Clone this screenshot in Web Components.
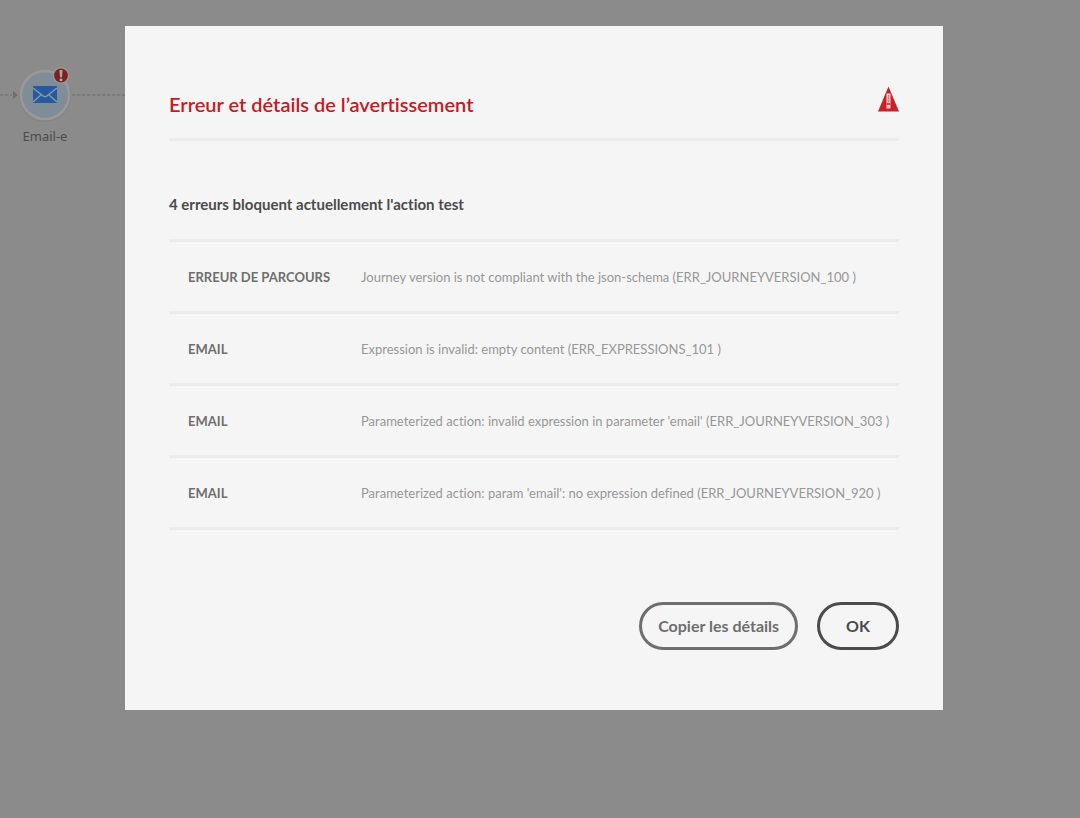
<!DOCTYPE html>
<html lang="fr">
<head>
<meta charset="utf-8">
<meta name="viewport" content="width=device-width, initial-scale=1">
<title>Erreur et détails de l’avertissement</title>
<style>
  html, body { margin: 0; min-height: 100%; }
  body { background: #8b8b8b; font-family: Lato, "Noto Sans", sans-serif; font-variant-ligatures: none; color: #4b4b4b; }
</style>
</head>
<body>
<journey-canvas>
  <journey-node slot="node">Email-e</journey-node>
  <error-dialog>
    <span slot="title">Erreur et détails de l’avertissement</span>
    <span slot="summary">4 erreurs bloquent actuellement l'action test</span>
    <error-table></error-table>
    <pill-button slot="actions" style="--tone:#6e6e6e">Copier les détails</pill-button>
    <pill-button slot="actions" style="--tone:#4b4b4b;--pad:26px">OK</pill-button>
  </error-dialog>
</journey-canvas>

<script>
class Base extends HTMLElement {
  constructor() {
    super();
    this.attachShadow({ mode: "open" }).innerHTML = this.constructor.html;
  }
}

customElements.define("journey-canvas", class extends Base {
  static html = `
    <style>
      :host { display: block; position: relative; min-height: 100vh; box-sizing: border-box; padding: 26px 137px 48px 125px; }
    </style>
    <slot name="node"></slot>
    <slot></slot>`;
});

customElements.define("journey-node", class extends Base {
  static html = `
    <style>
      :host { position: absolute; left: 0; top: 64px; width: 125px; color: #4b4b4b; }
      svg { display: block; }
      .label { width: 90px; text-align: center; font: 13px/18px "Noto Sans", sans-serif; }
    </style>
    <svg width="125" height="63" viewBox="0 0 125 63" aria-hidden="true">
      <path d="M0 31H12M72 31H125" stroke="#777" stroke-width="1.6" stroke-dasharray="3.4 1.6" fill="none"/>
      <path d="M13 27l5 4-5 4z" fill="#6e6e6e"/>
      <circle cx="45" cy="32" r="26" fill="#848484"/>
      <circle cx="45" cy="31" r="24" fill="#808c98" stroke="#999" stroke-width="2.6"/>
      <path d="M33 22H57V39H33z" fill="#265aa0"/>
      <path d="M33 24L42.500 31.500Q45 34 47.500 31.500L57 24M33 38L41 31M57 38L49 31" stroke="#8798ad" stroke-width="1.4" fill="none"/>
      <circle cx="61" cy="11.500" r="7.600" fill="#7d2020" stroke="#999" stroke-width="1.400"/>
      <path d="M59.500 6H62.500L62 13.200H60z" fill="#aaa"/>
      <circle cx="61" cy="15.700" r="1.500" fill="#aaa"/>
    </svg>
    <div class="label"><slot></slot></div>`;
});

customElements.define("error-dialog", class extends Base {
  static html = `
    <style>
      :host { display: block; }
      dialog { display: block; position: static; margin: 0; border: 0; box-sizing: border-box; width: 100%; max-width: none; max-height: none; padding: 60px 44px; background: #f5f5f5; color: inherit; }
      header { display: flex; justify-content: space-between; align-items: flex-start; padding-bottom: 16px; border-bottom: 3px solid #ebebeb; }
      h1 { margin: 0; font-size: 20px; line-height: 36px; font-weight: 600; color: #c41a24; }
      h2 { margin: 48px 0 20px; font-size: 15px; line-height: 30px; font-weight: 700; color: #4b4b4b; }
      svg { display: block; flex: none; }
      footer { display: flex; justify-content: flex-end; gap: 19px; margin-top: 72px; }
    </style>
    <dialog open aria-labelledby="heading">
      <header>
        <h1 id="heading"><slot name="title"></slot></h1>
        <svg width="21" height="26" viewBox="0 0 21 26" aria-hidden="true">
          <path d="M10.500 0.500L21 25.500H0z" fill="#cb2027"/>
          <path d="M8.500 7.500H12.500V22.500H8.500z" fill="#f3d6d7"/>
          <path d="M9.800 9H11.200V16.500H9.800z" fill="#dd7c80"/>
          <path d="M8.500 17H12.500V19H8.500z" fill="#d2484d"/>
        </svg>
      </header>
      <h2><slot name="summary"></slot></h2>
      <slot></slot>
      <footer><slot name="actions"></slot></footer>
    </dialog>`;
});

customElements.define("error-table", class extends Base {
  static html = `
    <style>
      :host { display: block; }
      table { width: 100%; border-collapse: separate; border-spacing: 0; border-top: 3px solid #ebebeb; }
      th, td { box-sizing: border-box; height: 72px; padding: 0 0 0 19px; border-bottom: 3px solid #ebebeb; text-align: left; white-space: nowrap; font-size: 13px; line-height: 24px; }
      th { width: 173px; font-weight: 700; color: #6e6e6e; }
      td { color: #979797; }
    </style>
    <table>
      <tbody>
        <tr><th scope="row">ERREUR DE PARCOURS</th><td>Journey version is not compliant with the json-schema (ERR_JOURNEYVERSION_100 )</td></tr>
        <tr><th scope="row">EMAIL</th><td>Expression is invalid: empty content (ERR_EXPRESSIONS_101 )</td></tr>
        <tr><th scope="row">EMAIL</th><td>Parameterized action: invalid expression in parameter 'email' (ERR_JOURNEYVERSION_303 )</td></tr>
        <tr><th scope="row">EMAIL</th><td>Parameterized action: param 'email': no expression defined (ERR_JOURNEYVERSION_920 )</td></tr>
      </tbody>
    </table>`;
});

customElements.define("pill-button", class extends Base {
  static html = `
    <style>
      :host { display: block; }
      button { box-sizing: border-box; height: 48px; padding: 0 var(--pad, 16px); border: 3px solid var(--tone); border-radius: 24px; background: transparent; color: var(--tone); font: inherit; font-size: 16px; font-weight: 700; line-height: 24px; white-space: nowrap; cursor: pointer; }
    </style>
    <button type="button"><slot></slot></button>`;
});
</script>
</body>
</html>
